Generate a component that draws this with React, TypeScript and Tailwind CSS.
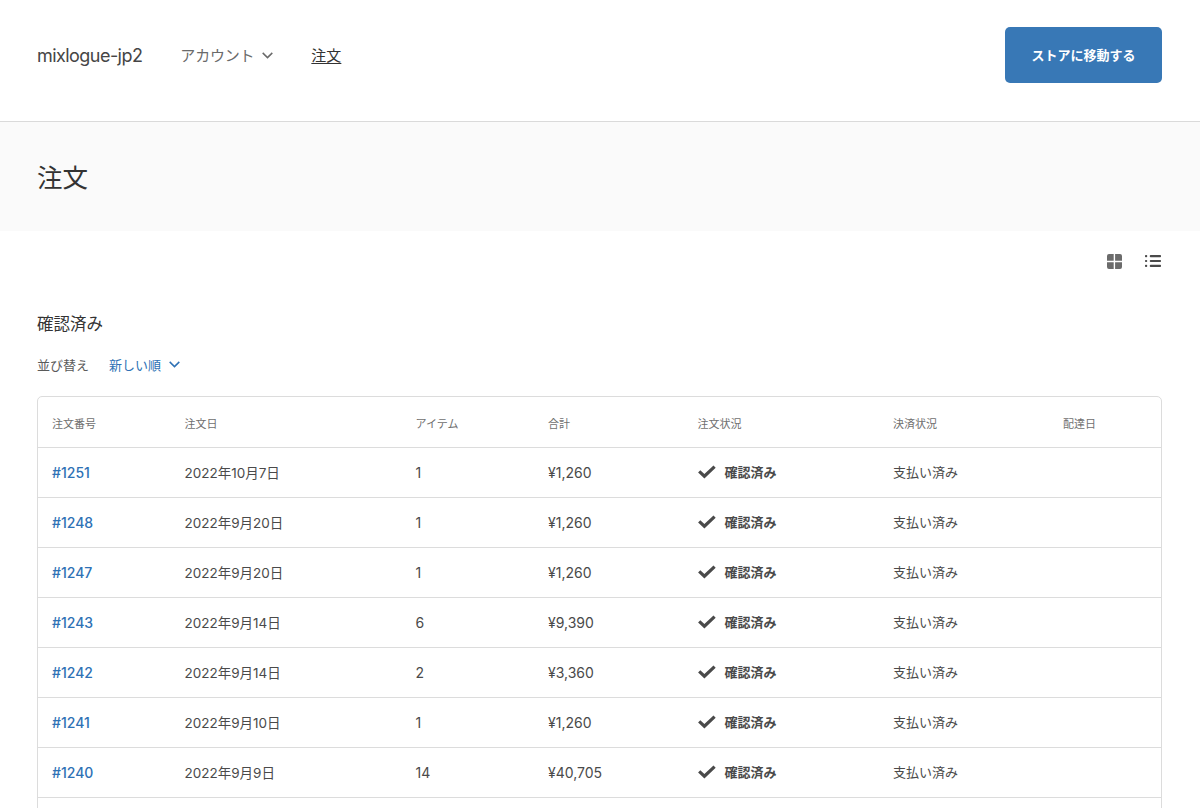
interface Order {
  number: string
  date: string
  items: number
  total: string
}

const ORDERS: Order[] = [
  { number: '#1251', date: '2022年10月7日', items: 1, total: '¥1,260' },
  { number: '#1248', date: '2022年9月20日', items: 1, total: '¥1,260' },
  { number: '#1247', date: '2022年9月20日', items: 1, total: '¥1,260' },
  { number: '#1243', date: '2022年9月14日', items: 6, total: '¥9,390' },
  { number: '#1242', date: '2022年9月14日', items: 2, total: '¥3,360' },
  { number: '#1241', date: '2022年9月10日', items: 1, total: '¥1,260' },
  { number: '#1240', date: '2022年9月9日', items: 14, total: '¥40,705' },
]

const HEADINGS = ['注文番号', '注文日', 'アイテム', '合計', '注文状況', '決済状況', '配達日']

const ROW =
  'grid h-[50px] grid-cols-[132.5px_231px_132.5px_149.5px_195.5px_170px_1fr] items-center pl-3.5'

function Chevron() {
  return (
    <svg width="11" height="7" viewBox="0 0 11 7" fill="none" stroke="currentColor" strokeWidth="1.5">
      <path d="M0.7 0.9 5.5 5.6 10.3 0.9" />
    </svg>
  )
}

function Check() {
  return (
    <svg
      width="18"
      height="14"
      viewBox="0 0 18 14"
      fill="none"
      stroke="currentColor"
      strokeWidth="3.2"
      className="-mt-0.5"
    >
      <path d="M1.2 6.3 6.4 11.2 16.6 1.6" />
    </svg>
  )
}

function GridIcon() {
  return (
    <svg width="15" height="15" viewBox="0 0 15 15" fill="currentColor">
      <path d="M2 0h4.7v6.7H0V2a2 2 0 0 1 2-2zM8.1 0H13a2 2 0 0 1 2 2v4.7H8.1zM0 8.2h6.7V15H2a2 2 0 0 1-2-2zM8.1 8.2H15V13a2 2 0 0 1-2 2H8.1z" />
    </svg>
  )
}

function ListIcon() {
  return (
    <svg width="16" height="12" viewBox="0 0 16 12" fill="currentColor">
      {[0, 4.9, 9.8].map((y) => (
        <g key={y}>
          <rect x="0" y={y} width="2.2" height="2.2" rx="0.8" />
          <rect x="4.8" y={y} width="11.2" height="2.2" rx="0.8" />
        </g>
      ))}
    </svg>
  )
}

export default function App() {
  return (
    <div className="h-screen overflow-hidden bg-white font-['Inter','Noto_Sans_CJK_JP',sans-serif] text-[13px] text-[#4a4a4a]">
      <header className="flex h-[122px] items-start justify-between border-b border-[#dadada] pt-[27px] pr-[38px] pl-[37px]">
        <nav className="flex h-14 items-center text-[15px]">
          <span className="text-[18px] tracking-[-0.55px] text-[#454545]">mixlogue-jp2</span>
          <button type="button" className="ml-[38px] flex items-center gap-2 text-[#6a6a6a]">
            <span className="pt-0.5 tracking-[-0.2px]">アカウント</span>
            <Chevron />
          </button>
          <a href="#" className="ml-[38px] pt-0.5 text-[#333] underline underline-offset-2">
            注文
          </a>
        </nav>
        <button
          type="button"
          className="h-14 w-[157px] rounded-[5px] bg-[#3878b6] pt-0.5 font-bold text-white"
        >
          ストアに移動する
        </button>
      </header>

      <div className="flex h-[109px] items-center bg-[#fafafa] px-[37px] pt-1">
        <h1 className="text-[25.5px] text-[#333]">注文</h1>
      </div>

      <main className="pr-[39px] pl-[37px]">
        <div className="flex h-[60px] items-center justify-end gap-[23px] text-[#6b6b6b]">
          <GridIcon />
          <span className="text-[#4a4a4a]">
            <ListIcon />
          </span>
        </div>

        <h2 className="mt-[21px] text-[16.5px] leading-6 text-[#333]">確認済み</h2>

        <div className="mt-[19px] flex h-5 items-center">
          <span className="pt-0.5 text-[#5a5a5a]">並び替え</span>
          <button type="button" className="ml-5 flex items-center gap-2 text-[#2e71b5]">
            <span className="pt-0.5">新しい順</span>
            <span className="pb-0.5">
              <Chevron />
            </span>
          </button>
        </div>

        <div className="mt-[21px] -mr-px rounded-[5px] border border-[#dcdcdc]">
          <div className={`${ROW} pt-1 text-[11px] text-[#707070]`}>
            {HEADINGS.map((heading) => (
              <span key={heading}>{heading}</span>
            ))}
          </div>
          {ORDERS.map((order) => (
            <div key={order.number} className={`${ROW} border-t border-[#dcdcdc]`}>
              <a href="#" className="text-[14px] font-medium text-[#2e71b5]">
                {order.number}
              </a>
              <span className="pt-px text-[13.5px]">{order.date}</span>
              <span className="text-[14px]">{order.items}</span>
              <span className="text-[14px]">{order.total}</span>
              <span className="flex items-center gap-[9px] font-bold">
                <Check />
                確認済み
              </span>
              <span>支払い済み</span>
            </div>
          ))}
          <div className={`${ROW} border-t border-[#dcdcdc]`} />
        </div>
      </main>
    </div>
  )
}
